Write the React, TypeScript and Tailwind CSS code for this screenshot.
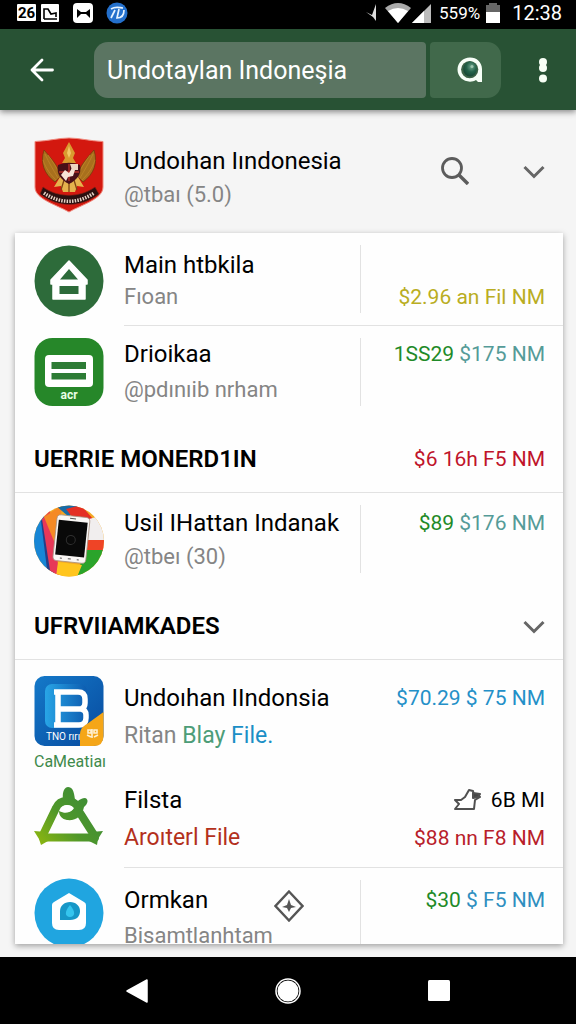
import type { ReactNode } from "react";

type Row = {
  title: string;
  subtitle: ReactNode;
  icon: ReactNode;
  price: ReactNode;
  divided?: boolean;
  aside?: ReactNode;
  rowClass: string;
  iconClass: string;
  linesClass: string;
  priceClass?: string;
};

function BackArrow() {
  return (
    <svg viewBox="0 0 24 24" className="h-6 w-6" fill="none" stroke="#fff" strokeWidth="2.8" strokeLinecap="round" strokeLinejoin="round">
      <path d="M22.5 12H2M12 2 2 12l10 10" />
    </svg>
  );
}

function BubbleIcon() {
  return (
    <svg viewBox="0 0 28 28" className="h-7 w-7">
      <defs>
        <radialGradient id="lens" cx="0.6" cy="0.35" r="0.7">
          <stop offset="0" stopColor="#6fa58d" />
          <stop offset="0.5" stopColor="#23644a" />
          <stop offset="1" stopColor="#144432" />
        </radialGradient>
      </defs>
      <path d="M14 1.5c6.8 0 12 4.8 12 11.5v13h-4l-2-2c-1.7 1.2-3.7 1.7-6 1.7C7 25.7 1.5 20.5 1.5 13.600S7 1.5 14 1.5z" fill="#f7fff8" />
      <circle cx="13.7" cy="13.6" r="8.6" fill="#3b6447" />
      <ellipse cx="14" cy="13" rx="6.8" ry="7.5" fill="url(#lens)" />
      <circle cx="16" cy="10.5" r="1.5" fill="#9cc5ae" />
    </svg>
  );
}

function ChevronDown() {
  return (
    <svg viewBox="0 0 22 22" className="h-[22px] w-[22px]" fill="none" stroke="#666" strokeWidth="3">
      <path d="M1.5 7 11 16.500 20.500 7" />
    </svg>
  );
}

function SearchIcon() {
  return (
    <svg viewBox="0 0 28 28" className="h-7 w-7" fill="none" stroke="#5c5c5c">
      <circle cx="11" cy="11" r="9.5" strokeWidth="2.8" />
      <path d="m17.5 17.5 9.500 9.500" strokeWidth="3.4" />
    </svg>
  );
}

function GarudaShield() {
  return (
    <svg viewBox="0 0 70 76" className="h-[76px] w-[70px]">
      <path d="M1 4.500C14 4 25 1 35 1s21 3 34 3.500V50c0 12-20 17-34 25C21 67 1 62 1 50z" fill="#d3180f" stroke="#f08a7e" />
      <g fill="#a8701d" stroke="#6d3a0c" strokeWidth="0.7">
        <path d="M10 13c6 7 14 15 17 26l-6 6C10 37 6 26 10 13z" />
        <path d="M60 13c-6 7-14 15-17 26l6 6c11-8 15-19 11-32z" />
      </g>
      <g stroke="#c48629" strokeWidth="0.7" fill="none">
        <path d="M11 17c4 9 9 17 13 24M9 23c3 9 8 15 13 20M14 18c5 7 9 13 12 20" />
        <path d="M59 17c-4 9-9 17-13 24M61 23c-3 9-8 15-13 20M56 18c-5 7-9 13-12 20" />
      </g>
      <path d="m35 5 6 11-2 5 3 5H28l3-5-2-5z" fill="#d99a2f" />
      <path d="m35 9 2 7-2 5-2-5z" fill="#f3c766" />
      <path d="m26 40-6 10 7-1 2 6h12l2-6 7 1-6-10z" fill="#e5b34d" />
      <path d="m30 43-3 10m8-8v10m5-12 3 10" stroke="#7f4512" strokeWidth="1.3" />
      <path d="M24 28c8-3 14-3 22 0 2 9-3 15-11 19-8-4-13-10-11-19z" fill="#491018" />
      <path d="M35 27v17M25 35h20" stroke="#b63028" strokeWidth="1.4" />
      <path d="m27 38 4-5 4 3 3-5 3 2-2 6-5 1-2 4z" fill="#f7e4d6" />
      <path d="M36 27h8v6h-6z" fill="#edd6c2" />
      <path d="M9 50c15 11 37 11 52 0l4 7C47 71 24 71 6 57z" fill="#2b1010" stroke="#8e1d13" strokeWidth="0.7" />
      <path d="M10 56c16 11 34 11 50 0" fill="none" stroke="#e6d3c6" strokeWidth="3.500" strokeDasharray="1.5 1.200" />
    </svg>
  );
}

function HomeBadge() {
  return (
    <svg viewBox="0 0 70 72" className="h-[72px] w-[70px]">
      <ellipse cx="35" cy="36" rx="34.5" ry="35.5" fill="#2d6b3a" />
      <path d="M35 16 17 35v4h2v15h32V39h2v-4z" fill="#fff" stroke="#fff" strokeWidth="1.5" strokeLinejoin="round" />
      <path d="m35 24-9 10.500h18zM25.500 41h19v8h-19z" fill="#2d6b3a" />
    </svg>
  );
}

function CardBadge() {
  return (
    <svg viewBox="0 0 70 68" className="h-[68px] w-[70px]">
      <rect x="0.5" width="69" height="68" rx="18" fill="#268729" />
      <rect x="11" y="17" width="48" height="32" rx="4" fill="#fff" />
      <path d="M17.500 24H52v7H17.500zM17.500 35H52v6.500H17.500z" fill="#2d7c35" />
      <text x="35" y="61" textAnchor="middle" fill="#e9ffe7" fontSize="12" fontWeight="700" fontFamily="Roboto, sans-serif">
        acr
      </text>
    </svg>
  );
}

function PhoneBadge() {
  return (
    <svg viewBox="0 0 70 72" className="h-[72px] w-[70px]">
      <clipPath id="phone-clip">
        <ellipse cx="35" cy="36" rx="35" ry="35.5" />
      </clipPath>
      <g clipPath="url(#phone-clip)">
        <rect width="70" height="72" fill="#f2a824" />
        <path d="M0 10h10l5 62H0z" fill="#1786d6" />
        <path d="m7 16 3-4 11 60h-7z" fill="#243f88" />
        <path d="m8 14 8-8 10 66h-9z" fill="#e73858" />
        <path d="m10 12 18-12-4 46z" fill="#f58a25" />
        <path d="M21 0h23l-9 12z" fill="#176ba7" />
        <path d="m32 4 15-4 12 14-12 10z" fill="#e42f24" />
        <path d="m55 14 15-4v25H53z" fill="#f1eeee" />
        <path d="M51 35h19v11H50z" fill="#ef4426" />
        <path d="M50 45h20v27H43z" fill="#2aa42b" />
        <path d="m24 57 24 3-5 12H22z" fill="#ffc51e" />
      </g>
      <g transform="rotate(6 37 33)">
        <rect x="21" y="11" width="33" height="46" rx="4" fill="#faf7f5" stroke="#a69284" strokeWidth="0.8" />
        <rect x="23" y="16" width="29" height="35" fill="#090909" />
        <circle cx="37" cy="35" r="4.5" fill="none" stroke="#303030" />
        <path d="M34 13.500h6M28 54h2m6 0h3m6 0h2" stroke="#555" />
      </g>
    </svg>
  );
}

function BlueBadge() {
  return (
    <svg viewBox="0 0 70 70" className="h-[70px] w-[70px]">
      <defs>
        <linearGradient id="blue-tile" x1="0" y1="0" x2="1" y2="1">
          <stop stopColor="#1479c9" />
          <stop offset="1" stopColor="#084a9e" />
        </linearGradient>
        <linearGradient id="blue-edge" x1="0" y1="0" x2="1" y2="0">
          <stop stopColor="#28a5e6" />
          <stop offset="1" stopColor="#0d5cb0" />
        </linearGradient>
      </defs>
      <rect x="0.5" width="69" height="70" rx="10" fill="url(#blue-tile)" />
      <rect x="11" y="8" width="42" height="44" rx="7" fill="url(#blue-edge)" />
      <path
        d="M20 16h24q7 0 7 7v4q0 5-4 6 5 1 5 6v3q0 7-7 7H20M24 16v33M24 33h22"
        fill="none"
        stroke="#fff"
        strokeWidth="5.5"
        strokeLinejoin="round"
      />
      <text x="12" y="64" fill="#fff" fontSize="10" fontFamily="Roboto, sans-serif">TNO rırı</text>
      <path d="M69.500 36v24q0 10-10 10H46V60c0-7 2-9 7-12z" fill="#f5a618" />
      <path d="M54 54h3v3h-3zM60 54h3v3h-3zM53 59l4 2M60 61l4-2M58 53v9" fill="none" stroke="#fff0d0" strokeWidth="1.6" />
    </svg>
  );
}

function TriangleBadge() {
  return (
    <svg viewBox="0 0 70 60" className="h-[60px] w-[70px]">
      <defs>
        <linearGradient id="leaf" gradientUnits="userSpaceOnUse" x1="0" y1="56" x2="56" y2="6">
          <stop stopColor="#8fb80f" />
          <stop offset="0.5" stopColor="#4f972a" />
          <stop offset="1" stopColor="#3c8c37" />
        </linearGradient>
      </defs>
      <g fill="none" stroke="url(#leaf)" strokeWidth="8" strokeLinecap="round">
        <path d="M9 49 22 22q3-7 11-7 7 0 10 5M46 27l14 22" />
        <path d="M9 51.500h52" />
      </g>
      <path d="M29 13c-1-8 2-12 5-12 4 0 6 3 7 13zM38 24c2-7 8-12 13-12 4 1 3 6-1 9-2 9-8 14-17 13-5-1-8-4-8-9 6 3 10 2 13-1z" fill="url(#leaf)" />
      <path d="m0 45 12 1 2 9-7 4-2-6zM69 45l-12 1-2 9 8 4 1-6z" fill="url(#leaf)" />
      <path d="M28 21c4-3 9-2 12 1-2 4-7 5-12 3z" fill="#fff" />
    </svg>
  );
}

function DropBadge() {
  return (
    <svg viewBox="0 0 70 70" className="h-[70px] w-[70px]">
      <circle cx="35" cy="35" r="34.5" fill="#20a5e0" />
      <path d="M35 15 20 24q-2 1-2 3v18q0 7 7 7h20q7 0 7-7V27q0-2-2-3z" fill="#fff" />
      <path d="M26 42h10c7 0 10-4 10-9s-4-9-10-9-10 4-10 9z" fill="#1797c7" />
      <path d="M36 27c6 7 5 12 0 12s-6-5 0-12z" fill="#35c5ee" />
    </svg>
  );
}

function ThumbIcon() {
  return (
    <svg viewBox="0 0 28 24" className="h-6 w-7" fill="#fff" stroke="#505050" strokeWidth="2" strokeLinejoin="round">
      <path d="M2 12h6l4-3 4-7 4 1 1 5 4-1 2 2-5 3-1 9H2l4-5z" />
      <path d="m20 5 7 1-2 3-5 1z" fill="#444" />
    </svg>
  );
}

function DiamondIcon() {
  return (
    <svg viewBox="0 0 30 32" className="mt-1.5 -mb-1.5 h-8 w-[30px]" fill="none" stroke="#555" strokeWidth="2.4">
      <path d="M15 1.500 28.500 16 15 30.500 1.500 16z" />
      <path d="m15 9-2 6-5 2 5 1 2 4 2-4 5-1-5-2z" fill="#555" stroke="none" />
    </svg>
  );
}

const topRows: Row[] = [
  {
    title: "Main htbkila",
    subtitle: "Fıoan",
    icon: <HomeBadge />,
    price: <span className="text-[#b9ad22]">$2.96 an Fil NM</span>,
    divided: true,
    rowClass: "border-b border-[#e2e2e2] pt-3 pb-3",
    iconClass: "pt-3",
    linesClass: "pt-1",
    priceClass: "justify-end",
  },
  {
    title: "Drioikaa",
    subtitle: "@pdınıib nrham",
    icon: <CardBadge />,
    price: (
      <span>
        <span className="text-[#1f8a28]">1SS29</span> <span className="text-[#559b98]">$175 NM</span>
      </span>
    ),
    divided: true,
    rowClass: "pt-3 pb-5",
    iconClass: "pt-3",
    linesClass: "gap-1",
  },
];

const deviceRow: Row = {
  title: "Usil IHattan Indanak",
  subtitle: "@tbeı (30)",
  icon: <PhoneBadge />,
  price: (
    <span>
      <span className="text-[#1f8a28]">$89</span> <span className="text-[#559b98]">$176 NM</span>
    </span>
  ),
  divided: true,
  rowClass: "pt-3 pb-5",
  iconClass: "pt-3",
  linesClass: "gap-0.5 pt-0.5",
};

const bottomRows: Row[] = [
  {
    title: "Undoıhan IIndonsia",
    subtitle: (
      <span className="text-[23px]">
        Ritan <span className="text-[#4d9d78]">Blay</span> <span className="text-[#1b8fc6]">File.</span>
      </span>
    ),
    icon: (
      <>
        <BlueBadge />
        <p className="mt-1.5 text-base leading-5 whitespace-nowrap text-[#3f8a4b]">CaMeatiaı</p>
      </>
    ),
    price: <span className="text-[#2490c8]">$70.29 $ 75 NM</span>,
    rowClass: "pt-4",
    iconClass: "pt-4 pb-1",
    linesClass: "gap-1.5 pt-1.5",
  },
  {
    title: "Filsta",
    subtitle: <span className="text-[23px] text-[#b3301c]">Aroıterl File</span>,
    icon: <TriangleBadge />,
    price: (
      <>
        <span className="flex items-center gap-2.5 text-black">
          <ThumbIcon />
          6B MI
        </span>
        <span className="text-[#b8202a]">$88 nn F8 NM</span>
      </>
    ),
    rowClass: "border-b border-[#e2e2e2] pt-2 pb-[13px]",
    iconClass: "pt-2.5",
    linesClass: "gap-1.5",
  },
  {
    title: "Ormkan",
    subtitle: "Bisamtlanhtam",
    icon: <DropBadge />,
    price: (
      <span>
        <span className="text-[#1f8a28]">$30</span> <span className="text-[#2f8fc0]">$ F5 NM</span>
      </span>
    ),
    divided: true,
    aside: <DiamondIcon />,
    rowClass: "pt-3 pb-3",
    iconClass: "pt-2.5",
    linesClass: "gap-1 pt-1",
  },
];

function ListRow({ row }: { row: Row }) {
  return (
    <li className="flex gap-5 pl-[19px]">
      <div className={`w-[70px] shrink-0 ${row.iconClass}`}>{row.icon}</div>
      <div className={`flex min-w-0 flex-1 ${row.rowClass}`}>
        <div className={`flex min-w-0 flex-1 flex-col whitespace-nowrap ${row.linesClass}`}>
          <div className="flex h-8 justify-between pr-14">
            <h3 className="text-2xl leading-8 text-black">{row.title}</h3>
            {row.aside}
          </div>
          <p className="text-[22px] leading-8 text-[#858585]">{row.subtitle}</p>
        </div>
        <div
          className={`flex w-[203px] shrink-0 flex-col items-end border-l pr-[18px] text-[21px] leading-8 whitespace-nowrap ${row.divided ? "border-[#e2e2e2]" : "border-transparent"} ${row.linesClass} ${row.priceClass ?? ""}`}
        >
          {row.price}
        </div>
      </div>
    </li>
  );
}

function SectionHeading({ title, children }: { title: string; children: ReactNode }) {
  return (
    <div className="flex items-center justify-between border-b border-[#e2e2e2] py-[17px] pr-[18px] pl-[19px]">
      <h2 className="text-2xl leading-8 font-semibold text-black">{title}</h2>
      {children}
    </div>
  );
}

function StatusBar() {
  return (
    <div className="flex h-[29px] shrink-0 items-center justify-between bg-black pr-[14px] pb-1 pl-[17px] text-white">
      <svg viewBox="0 0 112 22" className="h-[22px] w-28">
        <rect y="2" width="19" height="17" rx="1" fill="#fff" />
        <text x="9.5" y="16" textAnchor="middle" fontSize="15" fontWeight="700" fontFamily="Roboto, sans-serif">26</text>
        <rect x="24" y="2" width="18" height="18" rx="1" fill="#fff" />
        <path d="M27 17V7h4l3 5 5-1v4M27 17h13" fill="none" stroke="#000" strokeWidth="1.6" />
        <rect x="56" y="1" width="20" height="20" rx="4" fill="#fff" />
        <path d="m60 7 4 3h5l4-3v9l-4-4h-5l-4 4z" />
        <circle cx="100" cy="11" r="10.5" fill="#2470cc" />
        <path d="M94 7c5-3 9-1 12-1M98 8l-4 8M102 7l-2 9c5 0 7-3 7-8" fill="none" stroke="#e8f4ff" strokeWidth="1.7" />
      </svg>
      <div className="flex items-center">
        <svg viewBox="0 0 66 22" className="mr-[7px] h-[22px] w-[66px]">
          <path d="m0 10 6 3 4-11v17l-3-4z" fill="#ddd" />
          <path d="M19 6q13-10 26 0L32 21z" fill="#aaa" />
          <path d="M22 9q10-6 20 0L32 21z" fill="#fff" />
          <path d="M46 21 65 2v19z" fill="#bbb" />
          <path d="m46 21 12-12v12z" fill="#fff" />
        </svg>
        <span className="text-[17px] leading-6">559%</span>
        <svg viewBox="0 0 14 20" className="mr-3 ml-1.5 h-5 w-3.5">
          <path d="M3 0h8v2h3v7H0V2h3z" fill="#666" />
          <path d="M0 9h14v11H0z" fill="#fff" />
        </svg>
        <span className="text-xl leading-6">12:38</span>
      </div>
    </div>
  );
}

function NavigationBar() {
  return (
    <nav className="flex h-[67px] shrink-0 items-center justify-between bg-black px-[124px]">
      <button type="button" aria-label="Back">
        <svg viewBox="0 0 26 26" className="h-[26px] w-[26px]">
          <path d="M23 2v22L3 13z" fill="#fff" stroke="#fff" strokeWidth="1.5" strokeLinejoin="round" />
        </svg>
      </button>
      <button type="button" aria-label="Home">
        <svg viewBox="0 0 26 26" className="h-[26px] w-[26px]">
          <circle cx="13" cy="13" r="12" fill="none" stroke="#fff" strokeWidth="1.5" />
          <circle cx="13" cy="13" r="10.5" fill="#fff" />
        </svg>
      </button>
      <button type="button" aria-label="Recent apps">
        <svg viewBox="0 0 26 26" className="h-[26px] w-[26px]">
          <rect x="2" y="2" width="22" height="21" rx="1.5" fill="#fff" />
        </svg>
      </button>
    </nav>
  );
}

export default function App() {
  return (
    <div className="flex h-screen flex-col overflow-hidden bg-[#f5f5f5] font-['Roboto',sans-serif]">
      <StatusBar />

      <header className="z-10 flex shrink-0 items-center bg-[#285234] pt-[13px] pr-[21px] pb-3 pl-[30px] shadow-[0_2px_6px_rgba(0,0,0,0.45)]">
        <button type="button" aria-label="Go back" className="mr-10">
          <BackArrow />
        </button>
        <input
          type="text"
          aria-label="Search"
          defaultValue="Undotaylan Indoneşia"
          className="h-14 min-w-0 flex-1 rounded-l-[14px] rounded-r-[4px] bg-[#5b7562] px-[13px] text-[25px] text-white outline-none"
        />
        <button type="button" aria-label="Messages" className="ml-1 flex h-14 w-[71px] items-center justify-center rounded-l-[4px] rounded-r-[14px] bg-[#41694b] pl-2">
          <BubbleIcon />
        </button>
        <button type="button" aria-label="More options" className="ml-[30px] flex w-6 justify-center">
          <svg viewBox="0 0 8 26" className="h-[26px] w-2" fill="#f7fff5">
            <circle cx="4" cy="5" r="4" />
            <circle cx="4" cy="11" r="4" />
            <circle cx="4" cy="21.5" r="4" />
          </svg>
        </button>
      </header>

      <main className="flex min-h-0 flex-1 flex-col pb-[13px]">
        <section className="flex shrink-0 items-start gap-5 pt-[27px] pr-[31px] pb-5 pl-[34px]">
          <GarudaShield />
          <div className="flex flex-1 flex-col gap-0.5 pt-2">
            <h1 className="text-2xl leading-8 whitespace-nowrap text-black">Undoıhan Iındonesia</h1>
            <p className="text-[22px] leading-8 text-[#858585]">@tbaı (5.0)</p>
          </div>
          <div className="flex items-center gap-[54px] pt-5">
            <button type="button" aria-label="Search profile">
              <SearchIcon />
            </button>
            <button type="button" aria-label="Expand profile">
              <ChevronDown />
            </button>
          </div>
        </section>

        <div className="mr-[13px] ml-[15px] min-h-0 flex-1 overflow-hidden bg-[#fefefe] shadow-[0_2px_6px_rgba(0,0,0,0.35)]">
          <ul>
            {topRows.map((row) => (
              <ListRow key={row.title} row={row} />
            ))}
          </ul>
          <SectionHeading title="UERRIE MONERD1IN">
            <span className="text-[21px] leading-8 text-[#c0142a]">$6 16h F5 NM</span>
          </SectionHeading>
          <ul>
            <ListRow row={deviceRow} />
          </ul>
          <SectionHeading title="UFRVIIAMKADES">
            <button type="button" aria-label="Expand section">
              <ChevronDown />
            </button>
          </SectionHeading>
          <ul>
            {bottomRows.map((row) => (
              <ListRow key={row.title} row={row} />
            ))}
          </ul>
        </div>
      </main>

      <NavigationBar />
    </div>
  );
}
